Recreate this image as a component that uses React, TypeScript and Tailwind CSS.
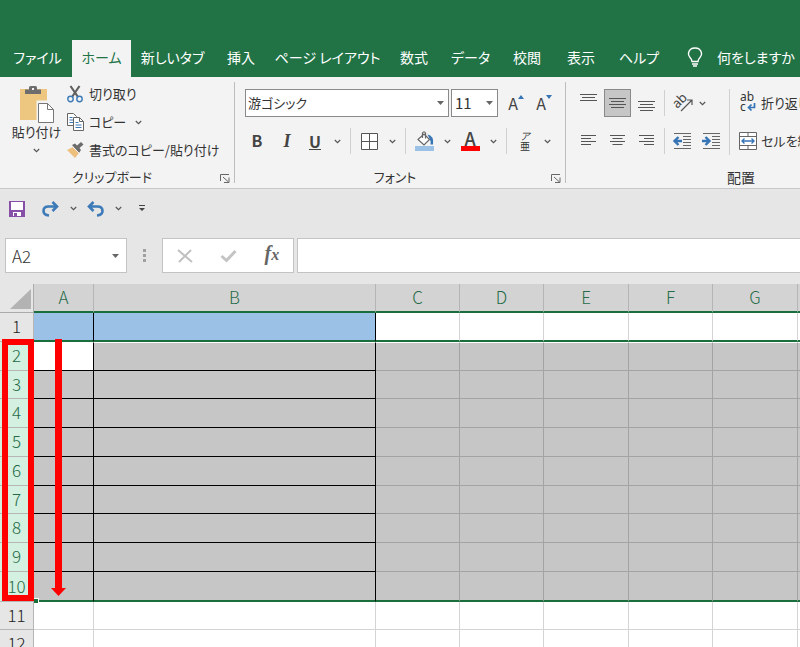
import type { ReactNode } from 'react';

const tabs = [
  { label: 'ファイル', width: 'w-[69px]' },
  { label: 'ホーム', width: 'w-[59px]', active: true },
  { label: '新しいタブ', width: 'w-[83px]' },
  { label: '挿入', width: 'w-[54px]' },
  { label: 'ページ レイアウト', width: 'w-[119px]' },
  { label: '数式', width: 'w-[54px]' },
  { label: 'データ', width: 'w-[59px]' },
  { label: '校閲', width: 'w-[54px]' },
  { label: '表示', width: 'w-[54px]' },
  { label: 'ヘルプ', width: 'w-[62px]' },
];

const columns = [
  { name: 'A', width: 'w-[60px]' },
  { name: 'B', width: 'w-[282px]' },
  { name: 'C', width: 'w-[84px]' },
  { name: 'D', width: 'w-[84px]' },
  { name: 'E', width: 'w-[85px]' },
  { name: 'F', width: 'w-[84px]' },
  { name: 'G', width: 'w-[85px]' },
  { name: 'H', width: 'w-[84px]' },
];

const rows = [
  { n: 1, height: 'h-[29px]' },
  { n: 2, height: 'h-[29px]' },
  { n: 3, height: 'h-[28px]' },
  { n: 4, height: 'h-[29px]' },
  { n: 5, height: 'h-[29px]' },
  { n: 6, height: 'h-[29px]' },
  { n: 7, height: 'h-[28px]' },
  { n: 8, height: 'h-[29px]' },
  { n: 9, height: 'h-[29px]' },
  { n: 10, height: 'h-[30px]' },
  { n: 11, height: 'h-[28px]' },
  { n: 12, height: 'h-[29px]' },
];

function Chevron() {
  return (
    <svg width="7" height="5" viewBox="0 0 7 5" fill="none" stroke="#555" strokeWidth="1.2">
      <path d="M.8 1 3.5 3.6 6.2 1" />
    </svg>
  );
}

function Caret() {
  return (
    <svg width="7" height="4" viewBox="0 0 7 4" fill="#666">
      <path d="M0 0h7L3.5 4z" />
    </svg>
  );
}

function MenuButton({ label, width = 'w-[18px]' }: { label: string; width?: string }) {
  return (
    <button aria-label={label} className={`flex h-7 shrink-0 items-center justify-center ${width}`}>
      <Chevron />
    </button>
  );
}

function Tool({ label, width = 'w-7', pressed, children }: { label: string; width?: string; pressed?: boolean; children: ReactNode }) {
  return (
    <button
      aria-label={label}
      aria-pressed={pressed}
      className={`flex h-7 shrink-0 items-center justify-center ${width} ${pressed ? 'border border-[#8a8a8a] bg-[#c6c6c6]' : ''}`}
    >
      {children}
    </button>
  );
}

function Separator() {
  return <div className="mx-1 h-[26px] w-px shrink-0 bg-[#d0d0d0]" />;
}

function GroupDivider() {
  return <div className="my-[5px] w-px shrink-0 bg-[#bdbdbd]" />;
}

function GroupFooter({ label }: { label: string }) {
  return (
    <div className="flex h-5 items-center pb-[2px] pl-1 text-[13px]">
      <span className="flex-1 text-center">{label}</span>
      <button aria-label={`${label}の詳細`} className="flex w-[14px] items-center pt-[2px]">
        <svg width="10" height="9" viewBox="0 0 10 9" fill="none" stroke="#666">
          <path d="M.5 7V.5H9M3 3l5.500 5M9 3.500v5H4" />
        </svg>
      </button>
    </div>
  );
}

function Lines({ d }: { d: string }) {
  return (
    <svg width="19" height="20" viewBox="0 0 19 20" fill="none" stroke="#555">
      <path d={d} />
    </svg>
  );
}

function PasteIcon() {
  return (
    <svg width="34" height="38" viewBox="0 0 34 38">
      <path d="M0 3h27v31H0z" fill="#edc77f" />
      <path d="M5 8V3.500h4V1.500Q9 0 10.500 0h5Q17 0 17 1.500v2h4V8z" fill="#6d6d6d" />
      <path d="M12 2h2v2h-2z" fill="#f3f3f3" />
      <path d="M18 16h10l6 6v15H18z" fill="#fff" stroke="#f3f3f3" strokeWidth="3" />
      <path d="M18.500 17.500h9l6 6v13h-15zM27.500 17.500v6h6" fill="#fff" stroke="#777" />
    </svg>
  );
}

function CutIcon() {
  return (
    <svg width="16" height="18" viewBox="0 0 16 18" fill="none">
      <path d="M3.500 1 11 12M12.500 1 5 12" stroke="#606060" strokeWidth="2.200" />
      <circle cx="3.500" cy="14" r="2.700" stroke="#3d7ab8" strokeWidth="1.400" />
      <circle cx="12.500" cy="14" r="2.700" stroke="#3d7ab8" strokeWidth="1.400" />
    </svg>
  );
}

function CopyIcon() {
  return (
    <svg width="17" height="18" viewBox="0 0 17 18">
      <path d="M.5.5h6l3 3v9h-9z" fill="#fff" stroke="#666" />
      <path d="M2.500 4.500h3M2.500 7h4M2.500 9.500h4" stroke="#3d7ab8" />
      <path d="M6.500 4.500h6l4 4v9h-10z" fill="#fff" stroke="#666" />
      <path d="M12.500 4.500v4h4" fill="none" stroke="#666" />
      <path d="M8.500 9.500h3M8.500 12h6M8.500 14.500h6" stroke="#3d7ab8" />
    </svg>
  );
}

function BrushIcon() {
  return (
    <svg width="17" height="16" viewBox="0 0 17 16">
      <path d="M0 8l6-3 6 6-4 5z" fill="#edc080" />
      <path d="m5 3 3-1.500 2 2L14 0l2.500 2.500L12.500 6l1.500 2-2 3z" fill="#6b6b6b" />
      <path d="m5 4 7 7" stroke="#f3f3f3" />
    </svg>
  );
}

function OrientationIcon() {
  return (
    <svg width="20" height="20" viewBox="0 0 20 20" fill="none" className="overflow-visible">
      <text transform="rotate(-45 7 9)" x="0" y="12" fontSize="13" fontFamily="Noto Sans, sans-serif" fill="#444">ab</text>
      <path d="M8 18 18.500 7.500M14 7h5v5" stroke="#555" strokeWidth="1.200" />
    </svg>
  );
}

function IndentIcon({ outward }: { outward?: boolean }) {
  return (
    <svg width="19" height="17" viewBox="0 0 19 17" fill="none" stroke="#666">
      <path d="M1 .5h17M10 3.500h8M10 6.500h8M10 9.500h8M10 12.500h8M1 15.500h17" />
      <path d={outward ? 'M9 8H2M5.500 4 1.500 8l4 4' : 'M0 8h7M3.500 4l4 4-4 4'} stroke="#3574b5" strokeWidth="2.400" />
    </svg>
  );
}

function Alignment() {
  return (
    <section className="flex w-[350px] shrink-0 flex-col pt-3">
      <div className="flex h-[66px]">
        <div className="flex w-[163px] shrink-0 flex-col gap-[10px] pl-[9px]">
          <div className="flex items-center">
            <div className="flex gap-[2px]">
              <Tool label="上揃え" width="w-[27px]"><Lines d="M1 1.500h17M3 4.500h13M1 7.500h17" /></Tool>
              <Tool label="上下中央揃え" width="w-[27px]" pressed><Lines d="M1 5.500h17M3 8.500h13M1 11.500h17M3 14.500h13" /></Tool>
              <Tool label="下揃え" width="w-[27px]"><Lines d="M1 8.500h17M3 11.500h13M1 14.500h17M3 17.500h13" /></Tool>
            </div>
            <Separator />
            <Tool label="方向" width="w-[27px]"><OrientationIcon /></Tool>
            <MenuButton label="方向のオプション" width="w-3" />
          </div>
          <div className="flex items-center">
            <div className="flex gap-[2px]">
              <Tool label="左揃え" width="w-[27px]"><Lines d="M2 4.500h15M2 7.500h10M2 10.500h15M2 13.500h10" /></Tool>
              <Tool label="中央揃え" width="w-[27px]"><Lines d="M2 4.500h15M4.500 7.500h10M2 10.500h15M4.500 13.500h10" /></Tool>
              <Tool label="右揃え" width="w-[27px]"><Lines d="M2 4.500h15M7 7.500h10M2 10.500h15M7 13.500h10" /></Tool>
            </div>
            <Separator />
            <div className="flex gap-[2px]">
              <Tool label="インデントを減らす" width="w-[27px]"><IndentIcon outward /></Tool>
              <Tool label="インデントを増やす" width="w-[27px]"><IndentIcon /></Tool>
            </div>
          </div>
        </div>
        <div className="w-px shrink-0 bg-[#d0d0d0]" />
        <div className="flex flex-col gap-[10px] pl-2 text-[13px]">
          <button className="flex h-7 items-center gap-[3px] whitespace-nowrap">
            <svg width="20" height="20" viewBox="0 0 20 20" fill="none" className="overflow-visible">
              <text x="2" y="8" fontSize="12" fontFamily="Noto Sans, sans-serif" fill="#333">ab</text>
              <text x="2" y="18" fontSize="12" fontFamily="Noto Sans, sans-serif" fill="#333">c</text>
              <path d="M16.500 10v4.500H11M13.500 11.500l-3 3 3 3" stroke="#3574b5" strokeWidth="1.700" />
            </svg>
            折り返して全体を表示する
          </button>
          <button className="flex h-7 items-center gap-[3px] whitespace-nowrap">
            <svg width="20" height="20" viewBox="0 0 20 20" fill="none">
              <path d="M1.500 1.500h17v17h-17zM1.500 5.500h17M1.500 14.500h17M10 1.500v4M10 14.500v4" fill="#fff" stroke="#666" />
              <path d="M4 10h12M6.500 7.500 4 10l2.500 2.500M13.500 7.500 16 10l-2.500 2.500" stroke="#3574b5" strokeWidth="1.400" />
            </svg>
            セルを結合して中央揃え
          </button>
        </div>
      </div>
      <div className="mt-[13px] flex h-5 items-center justify-center pb-[2px]">配置</div>
    </section>
  );
}

function Clipboard() {
  return (
    <section className="flex w-[234px] shrink-0 flex-col pt-[3px]">
      <div className="flex h-[84px] text-[13px]">
        <button className="flex w-[67px] shrink-0 flex-col items-center pt-[6px] pl-[6px]">
          <PasteIcon />
          <span className="h-6 leading-4 whitespace-nowrap">貼り付け</span>
          <Chevron />
        </button>
        <div className="flex flex-col">
          <button className="flex h-7 items-center gap-[6px]"><CutIcon /><span>切り取り</span></button>
          <div className="flex items-center">
            <button className="flex h-7 items-center gap-[5px]"><CopyIcon /><span>コピー</span></button>
            <MenuButton label="コピーのオプション" width="w-6" />
          </div>
          <button className="flex h-7 items-center gap-[5px] whitespace-nowrap"><BrushIcon /><span>書式のコピー/貼り付け</span></button>
        </div>
      </div>
      <div className="mt-1"><GroupFooter label="クリップボード" /></div>
    </section>
  );
}

function FontTools() {
  return (
    <section className="flex w-[330px] shrink-0 flex-col pt-3">
      <div className="flex items-center gap-[2px] pl-[10px]">
        <label className="relative flex h-7 w-[204px] items-center border border-[#8a8a8a] bg-white">
          <select aria-label="フォント名" className="h-full w-full appearance-none bg-transparent pl-[2px] text-[13px] outline-none">
            <option>游ゴシック</option>
          </select>
          <span className="pointer-events-none absolute right-1"><Caret /></span>
        </label>
        <label className="relative flex h-7 w-[47px] items-center border border-[#8a8a8a] bg-white">
          <select aria-label="フォント サイズ" className="h-full w-full appearance-none bg-transparent pl-[3px] text-[15px] outline-none">
            <option>11</option>
          </select>
          <span className="pointer-events-none absolute right-1"><Caret /></span>
        </label>
        <div className="flex pl-[2px] text-base text-[#444]">
          <Tool label="フォント サイズの拡大">
            A
            <svg className="mb-3" width="6" height="4" viewBox="0 0 6 4" fill="#3574b5"><path d="M0 4h6L3 0z" /></svg>
          </Tool>
          <Tool label="フォント サイズの縮小">
            A
            <svg className="mb-3" width="6" height="4" viewBox="0 0 6 4" fill="#3574b5"><path d="M0 0h6L3 4z" /></svg>
          </Tool>
        </div>
      </div>
      <div className="mt-[10px] flex items-center pl-[7px] text-base text-[#444]">
        <Tool label="太字" width="w-[30px]"><b className="pb-[2px]">B</b></Tool>
        <Tool label="斜体" width="w-[30px]"><i className="font-['Liberation_Serif',serif] text-lg font-bold">I</i></Tool>
        <Tool label="下線" width="w-[26px]"><span className="border-b border-[#444] leading-4 font-bold">U</span></Tool>
        <MenuButton label="下線のオプション" />
        <Separator />
        <Tool label="罫線">
          <svg width="17" height="17" viewBox="0 0 17 17" fill="#fff" stroke="#555"><path d="M.5.5h16v16H.5zM8.500.5v16M.5 8.500h16" /></svg>
        </Tool>
        <MenuButton label="罫線のオプション" />
        <Separator />
        <Tool label="塗りつぶしの色">
          <svg width="19" height="20" viewBox="0 0 19 20" fill="none">
            <path d="m3 8.500 6-5.500 5.500 5.500L9 14z" fill="#fff" stroke="#666" strokeWidth="1.200" />
            <path d="M7.500 7V2Q9-.5 10.500 2v5.500" stroke="#666" strokeWidth="1.200" />
            <path d="M12.500 3.500q6.500 1 5.500 10h-2.500q.5-3-.5-5z" fill="#3574b5" />
            <path d="M0 15h19v5H0z" fill="#9bc2e6" />
          </svg>
        </Tool>
        <MenuButton label="塗りつぶしのオプション" />
        <Tool label="フォントの色">
          <span className="w-[19px] border-b-5 border-[#ff0000] text-center text-lg leading-[15px] font-medium text-[#444]">A</span>
        </Tool>
        <MenuButton label="フォントの色のオプション" />
        <Separator />
        <Tool label="ふりがな">
          <span className="flex flex-col items-center text-[10px] leading-[10px] text-[#333]"><i>ア</i><span>亜</span></span>
        </Tool>
        <MenuButton label="ふりがなのオプション" width="w-4" />
      </div>
      <div className="mt-[13px]"><GroupFooter label="フォント" /></div>
    </section>
  );
}

function QuickAccess() {
  return (
    <div className="flex h-[49px] items-center pb-[10px] pl-[9px]">
      <button aria-label="上書き保存" className="mr-4 shrink-0">
        <svg width="16" height="16" viewBox="0 0 16 16">
          <path d="M0 0h16v16H0z" fill="#8650a8" />
          <path d="M2 1h12v8H2zM4 11h8v4H4z" fill="#fff" />
          <path d="M5 12h3v3H5z" fill="#8650a8" />
        </svg>
      </button>
      <button aria-label="やり直し">
        <svg width="19" height="16" viewBox="0 0 19 16" fill="none" stroke="#3d7ab8" strokeWidth="2.600">
          <path d="M8 14.500Q2.500 14 2.500 10 2.500 5.500 7.500 5.500h8.500M11.500 1l4.500 4.500L11.500 10" />
        </svg>
      </button>
      <MenuButton label="やり直しの履歴" width="w-[26px]" />
      <button aria-label="元に戻す">
        <svg width="19" height="16" viewBox="0 0 19 16" fill="none" stroke="#3d7ab8" strokeWidth="2.600">
          <path d="M11 14.500q5.500-.5 5.500-4.500 0-4.500-5-4.500H3M7.500 1 3 5.500 7.500 10" />
        </svg>
      </button>
      <MenuButton label="元に戻す履歴" width="w-[26px]" />
      <button aria-label="クイック アクセスのカスタマイズ" className="ml-2">
        <svg width="6" height="7" viewBox="0 0 6 7" fill="#444"><path d="M0 0h6v1H0zM0 3h6L3 6z" /></svg>
      </button>
    </div>
  );
}

function FormulaBar() {
  return (
    <div className="flex h-[35px] pl-[5px]">
      <div className="flex w-[122px] shrink-0 items-center border border-[#c3c3c3] bg-white pr-[7px]">
        <input aria-label="名前ボックス" defaultValue="A2" className="w-full min-w-0 flex-1 bg-transparent pl-[6px] text-[17px] font-light outline-none" />
        <Caret />
      </div>
      <div className="flex w-[35px] shrink-0 items-center justify-center">
        <svg width="3" height="13" viewBox="0 0 3 13" fill="#a0a0a0"><path d="M0 0h3v3H0zM0 5h3v3H0zM0 10h3v3H0z" /></svg>
      </div>
      <div className="mr-[3px] flex w-[132px] shrink-0 items-center justify-around border border-[#c3c3c3] bg-white">
        <button aria-label="キャンセル">
          <svg width="16" height="14" viewBox="0 0 16 14" stroke="#c0c0c0" strokeWidth="2"><path d="m1 1 14 12M14 1 2 13" /></svg>
        </button>
        <button aria-label="入力">
          <svg width="17" height="14" viewBox="0 0 17 14" fill="none" stroke="#c4c4c4" strokeWidth="3"><path d="m1.500 7 5 4.500L15.500 2" /></svg>
        </button>
        <button aria-label="関数の挿入" className="pb-1 font-['Liberation_Serif',serif] text-xl leading-6 font-bold text-[#666] italic">
          f<span className="text-base">x</span>
        </button>
      </div>
      <input aria-label="数式バー" className="min-w-0 flex-1 border border-r-0 border-[#c3c3c3] bg-white px-2 outline-none" />
    </div>
  );
}

function cellStyle(row: number, col: string) {
  const bordered = col === 'A' || col === 'B';
  const selected = row >= 2 && row <= 10;
  let fill = 'bg-white';
  if (row === 1 && bordered) fill = 'bg-[#9bc2e6]';
  if (selected && !(row === 2 && col === 'A')) fill = 'bg-[#c6c6c6]';
  let right = 'border-r-[#d4d4d4]';
  if (selected) right = 'border-r-[#a3a3a3]';
  if (bordered && row <= 10) right = 'border-r-black';
  let bottom = 'border-b border-b-[#d4d4d4]';
  if (selected) bottom = bordered ? 'border-b border-b-black' : 'border-b border-b-[#a3a3a3]';
  if (row === 1 || row === 10) bottom = 'border-b-2 border-b-[#1a6e3c]';
  const top = row === 2 ? 'border-t border-t-white' : '';
  return `border-r ${fill} ${right} ${bottom} ${top}`;
}

function Sheet() {
  return (
    <div className="relative mt-[11px]">
      <table className="w-[882px] table-fixed border-separate border-spacing-0 text-[17px] leading-5 text-[#222]">
        <thead>
          <tr className="h-[29px]">
            <th className="w-[34px] border-r border-b border-[#ababab] p-0 align-bottom">
              <button aria-label="すべて選択" className="ml-[10px] block pb-[3px]">
                <svg width="21" height="20" viewBox="0 0 21 20" fill="#b3b3b3"><path d="M21 0v20H0z" /></svg>
              </button>
            </th>
            {columns.map((c) => (
              <th key={c.name} scope="col" className={`border-r border-b-2 border-r-[#b5b5b5] border-b-[#1a6e3c] bg-[#d3d3d3] p-0 pb-px font-light text-[#256b47] ${c.width}`}>
                {c.name}
              </th>
            ))}
          </tr>
        </thead>
        <tbody>
          {rows.map((r) => (
            <tr key={r.n} className={r.height}>
              <th scope="row" className={`border-r border-b border-[#b5b5b5] p-0 pb-[2px] font-light ${r.n >= 2 && r.n <= 10 ? 'bg-[#d3f0e0] text-[#256b47]' : 'bg-[#e6e6e6]'}`}>
                {r.n}
              </th>
              {columns.map((c) => (
                <td key={c.name} className={`p-0 ${cellStyle(r.n, c.name)}`} />
              ))}
            </tr>
          ))}
        </tbody>
      </table>
      <div className="pointer-events-none absolute top-[314px] left-[34px] h-[5px] w-[5px] border-t border-r border-white bg-[#1a6e3c]" />
      <div className="pointer-events-none absolute top-[55px] left-[2px] h-[262px] w-8 border-6 border-[#ff0000]" />
      <svg className="pointer-events-none absolute top-[55px] left-[51px]" width="15" height="258" viewBox="0 0 15 258" fill="#ff0000">
        <path d="M4 0h7v249h4l-7.500 8L0 249h4z" />
      </svg>
    </div>
  );
}

export default function App() {
  return (
    <div className="h-screen overflow-hidden bg-[#e6e6e6] font-['Noto_Sans_CJK_JP',sans-serif] text-sm leading-5 text-[#333] [font-feature-settings:'palt']">
      <header className="bg-[#217346] pt-10">
        <nav className="flex h-[37px] overflow-hidden pl-[3px] whitespace-nowrap text-white">
          {tabs.map((t) => (
            <button key={t.label} className={`shrink-0 pb-[3px] ${t.width} ${t.active ? 'bg-[#f3f3f3] text-[#217346]' : ''}`}>
              {t.label}
            </button>
          ))}
          <button className="flex shrink-0 items-center gap-[14px] pb-[3px] pl-[17px]">
            <svg width="16" height="20" viewBox="0 0 16 20" fill="none" stroke="#fff" strokeWidth="1.400">
              <path d="M5 14.500q0-2-2-4Q1 8.500 1.500 6 2.500 1 8 1t6.500 5q.5 2.500-1.500 4.500-2 2-2 4zM5 17h6M6 19h4" />
            </svg>
            何をしますか
          </button>
        </nav>
      </header>
      <main>
        <div className="flex h-28 overflow-hidden border-b border-[#c8c8c8] bg-[#f3f3f3]">
          <Clipboard />
          <GroupDivider />
          <FontTools />
          <GroupDivider />
          <Alignment />
        </div>
        <QuickAccess />
        <FormulaBar />
        <Sheet />
      </main>
    </div>
  );
}
